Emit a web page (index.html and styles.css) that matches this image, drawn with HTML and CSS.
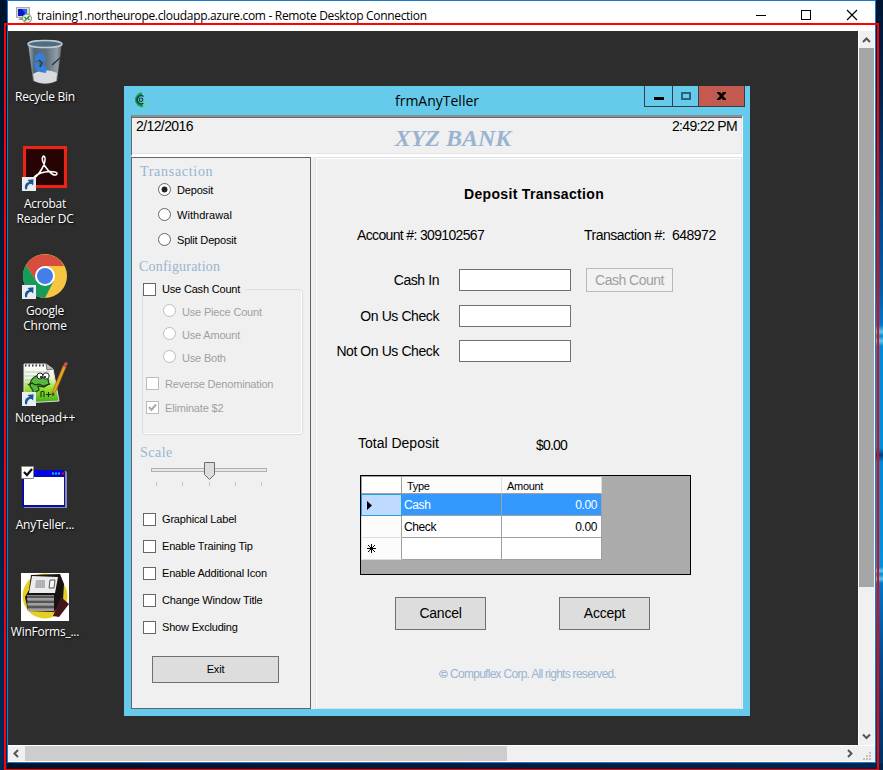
FILE: index.html
```html
<!DOCTYPE html>
<html lang="en">
<head>
<meta charset="utf-8">
<title>training1.northeurope.cloudapp.azure.com - Remote Desktop Connection</title>
<link rel="stylesheet" href="styles.css">
</head>
<body>
<svg width="0" height="0" class="defs">
  <symbol id="shortcut" viewBox="0 0 14 14"><rect width="14" height="14" fill="#e9eef3"/><path d="M3.200 12.200C2.200 8.400 4 5.300 7.300 5.100L5.400 3.100 11.500 2.300 11.200 8.500 9.200 6.800C6.300 7.200 5 9 5.100 12.200Z" fill="#1c5795"/></symbol>
</svg>
<div class="rdp">
  <header class="rdp-bar">
    <svg class="rdp-icon" width="17" height="17" viewBox="0 0 17 17"><rect x=".5" y=".5" width="13" height="10" fill="#d5d8d8" stroke="#aaa"/><path d="M2 2h9v7H2z" fill="#0c19c8"/><path d="M6 2h5v7z" fill="#2e62ef"/><path d="M4 11h6v2H2z" fill="#999"/><circle cx="11" cy="11.500" r="4.500" fill="#e8eee4" stroke="#8a9288"/><path d="M8.500 10l2 2-2 2M13.500 9l-2 2 2 2" fill="none" stroke="#268b25" stroke-width="1.300"/></svg>
    <span class="rdp-title">training1.northeurope.cloudapp.azure.com - Remote Desktop Connection</span>
    <svg class="rdp-controls" width="110" height="20" viewBox="0 0 110 20" fill="none" stroke="#000"><path d="M3 10.500h10"/><rect x="48.500" y="5.500" width="9" height="9"/><path d="M94 5l10 10M104 5L94 15" stroke-width="1.200"/></svg>
  </header>
  <div class="viewport">
    <main class="desktop">
      <nav class="shortcuts">
        <div class="shortcut"><svg width="48" height="48" viewBox="0 0 48 48">
          <defs><linearGradient id="bin" x2="1"><stop stop-color="#aab4bb"/><stop offset=".18" stop-color="#52687a"/><stop offset=".55" stop-color="#60727f"/><stop offset=".85" stop-color="#939da3"/><stop offset="1" stop-color="#59636b"/></linearGradient></defs>
          <path d="M7 5h34l-5 38q-12 6-24 0Z" fill="url(#bin)"/><ellipse cx="24" cy="6" rx="17" ry="3.500" fill="#4b6d85" stroke="#c5ccd0" stroke-width="1.500"/><path d="M12 36q12-7 24-1l-1 8q-11 5-22 0Z" fill="#d8dadb"/><path d="M14 18l4-3 5 2 2 5-4 3-3-3-4 1zM13 25l4-1 1 5 4-2 4 2-1 6-6-1-4-2z" fill="#3480dd"/><path d="M18 22l3 3-2 4M31 27l9-8" fill="none" stroke="#263b4d" stroke-width="1.500"/></svg>
          <span class="name">Recycle Bin</span></div>
        <div class="shortcut"><svg width="48" height="48" viewBox="0 0 48 48"><rect x="3.500" y="2.500" width="41" height="39" fill="#270404" stroke="#ef2213" stroke-width="3"/><path d="M12 34C18 30 25 19 24 13 23 9 20 12 22 17 24 23 31 31 35 30 39 27 31 26 24 27 18 28 13 31 12 34Z" fill="none" stroke="#fff" stroke-width="1.500"/><use href="#shortcut" x="1" y="32" width="14" height="14"/></svg>
          <span class="name">Acrobat<br>Reader DC</span></div>
        <div class="shortcut"><svg width="48" height="48" viewBox="0 0 48 48"><circle cx="24" cy="24" r="22" fill="#f7c640"/><path d="M4.900 13l10.400 16L24 14h19.100A22 22 0 0 0 4.900 13Z" fill="#d94d3f"/><path d="M4.900 13A22 22 0 0 0 24 46L32.700 29 15.300 29Z" fill="#169b58"/><circle cx="24" cy="24" r="10" fill="#fff"/><circle cx="24" cy="24" r="8" fill="#437ee9"/><use href="#shortcut" x="1" y="33" width="14" height="14"/></svg>
          <span class="name">Google<br>Chrome</span></div>
        <div class="shortcut"><svg width="48" height="48" viewBox="0 0 48 48">
          <defs><linearGradient id="leaf" x2="0" y2="1"><stop stop-color="#fff"/><stop offset=".35" stop-color="#f2f6d5"/><stop offset=".6" stop-color="#a2e531"/><stop offset="1" stop-color="#37ab17"/></linearGradient></defs>
          <path d="M3 5h22l7 5 6 32-35 2z" fill="url(#leaf)" stroke="#ddd"/><path d="M4 13h25M4 17h25M4 21h26M4 25h27" stroke="#91b5d5" stroke-width=".7"/><path d="M4 6.500h21" stroke="#333" stroke-width="2" stroke-dasharray="1.500 2"/><path d="M25 5l1 6 6-1" fill="#bbb" stroke="#444" stroke-width=".7"/><path d="M9 27C9 18 17 15 21 18L27 20 28 25 23 28 17 27 18 31 13 34 11 30Z" fill="#58b83b" stroke="#17491c" stroke-width="1.300"/><circle cx="19" cy="17" r="3" fill="#fff" stroke="#222"/><circle cx="25" cy="17" r="3.200" fill="#fff" stroke="#222"/><circle cx="20" cy="18" r="1"/><circle cx="24" cy="18" r="1"/><path d="M7 26l4-2 3 2 4-1 4 2 7-2M20 38v-5q3-2 3 1v4M25 35.500h5M27.500 33v5M30.500 35h3M32 33v4" fill="none" stroke="#282718" stroke-width="1.100"/><path d="M32 31l10-24 3 1-10 24-4 3z" fill="#e6a31d" stroke="#936113" stroke-width=".6"/><path d="M42 7l2-4 3 1-2 4z" fill="#cb4f51"/><use href="#shortcut" x="1" y="33" width="14" height="14"/></svg>
          <span class="name">Notepad++</span></div>
        <div class="shortcut"><svg width="48" height="48" viewBox="0 0 48 48"><path d="M3 5h42l1 2v35H3z" fill="#8c8cab"/><path d="M1 4h42l1 2v35H1z" fill="#080ca0"/><path d="M2 5h40v4H2z" fill="#00f"/><path d="M3 11h40v28H3z" fill="#fff"/><path d="M31 7.500h8" stroke="#19bcfa" stroke-width="2" stroke-dasharray="2 1"/><path d="M41 7.500h2" stroke="#f00" stroke-width="2"/><path d="M.5.5h12v12H.5z" fill="#fff" stroke="#888"/><path d="M3 6l3 3 5-6" fill="none" stroke="#111" stroke-width="2.200"/></svg>
          <span class="name">AnyTeller...</span></div>
        <div class="shortcut"><svg width="48" height="48" viewBox="0 0 48 48"><rect width="48" height="48" fill="#fff"/><circle cx="24" cy="23" r="22.500" fill="#e4cf22"/><path d="M10 2l29-1 4 10-1 16-9 12-26-1-3-14 4-7z" fill="#171313"/><path d="M11 3l26 1-3 16H8z" fill="#ececec"/><path d="M15 7h9v8h-10z" fill="#b1b1b8"/><path d="M29 7h5l-1 8h-5z" fill="#f9f9f9" stroke="#555"/><path d="M6 22h27v16H7z" fill="#85858a"/><path d="M6 24h27M6 29h27M6 34h27" stroke="#444" stroke-width="1.300"/><path d="M6 26h27M6 31h27M7 37h26" stroke="#bbb"/><path d="M34 38l6-14 8 7-10 13-6-1z" fill="#43151d"/></svg>
          <span class="name">WinForms_...</span></div>
      </nav>

      <section class="app">
        <header class="app-bar">
          <svg class="app-icon" width="18" height="18" viewBox="0 0 18 18" fill="none"><path d="M9 1.800A5.800 5.800 0 1 0 10 13.800" stroke="#16a04e" stroke-width="3"/><path d="M10.500 4.500A4 4 0 1 0 10.500 11" stroke="#123e3c" stroke-width="1.500"/><circle cx="8" cy="7.800" r="1.800" stroke="#123e3c" stroke-width="1.200"/><path d="M9 10h6M10 13l4-2v3h2" stroke="#70cf9b"/></svg>
          <span class="app-title">frmAnyTeller</span>
          <div class="caption">
            <span class="cap cap-min"><svg width="10" height="3"><path d="M0 0h10v3H0z"/></svg></span>
            <span class="cap cap-max"><svg width="10" height="8" fill="none" stroke="#2d6277" stroke-width="2"><path d="M1 1h8v6H1z"/></svg></span>
            <span class="cap cap-close"><svg width="9" height="8" viewBox="0 0 9 8"><path d="M0 0h3l1.500 2L6 0h3v1L6 4l3 3v1H6L4.500 6 3 8H0V7l3-3-3-3z"/></svg></span>
          </div>
        </header>
        <div class="client">
          <div class="banner">
            <span class="date">2/12/2016</span>
            <span class="bank">XYZ BANK</span>
            <span class="time">2:49:22 PM</span>
          </div>
          <div class="panes">
            <aside class="options">
              <h2 class="heading h-trans">Transaction</h2>
              <div class="radios">
                <label class="opt"><i class="radio on"></i><span>Deposit</span></label>
                <label class="opt wide"><i class="radio"></i><span>Withdrawal</span></label>
                <label class="opt"><i class="radio"></i><span>Split Deposit</span></label>
              </div>
              <h2 class="heading h-conf">Configuration</h2>
              <fieldset class="cash">
                <legend class="opt legend"><i class="check"></i><span>Use Cash Count</span></legend>
                <label class="opt off sub"><i class="radio"></i><span>Use Piece Count</span></label>
                <label class="opt off sub"><i class="radio"></i><span>Use Amount</span></label>
                <label class="opt off sub"><i class="radio"></i><span>Use Both</span></label>
                <label class="opt off flag first"><i class="check"></i><span>Reverse Denomination</span></label>
                <label class="opt off flag"><i class="check"><svg width="11" height="11" viewBox="0 0 11 11"><path d="M2 5l2.500 3L9 2.500" fill="none" stroke="#aaa" stroke-width="2"/></svg></i><span>Eliminate $2</span></label>
              </fieldset>
              <h2 class="heading h-scale">Scale</h2>
              <svg class="slider" width="118" height="26" viewBox="0 0 118 26"><rect x=".5" y="6.500" width="115" height="3" fill="#e7eaea" stroke="#b0b0b0"/><path d="M5.500 20v4M31.500 20v4M58.500 20v4M84.500 20v4M110.500 20v4" stroke="#c4c4c4"/><path d="M53.500.5h10v12l-5 5-5-5z" fill="#ddd" stroke="#6b6b6b"/></svg>
              <div class="toggles">
                <label class="opt"><i class="check"></i><span>Graphical Label</span></label>
                <label class="opt"><i class="check"></i><span>Enable Training Tip</span></label>
                <label class="opt"><i class="check"></i><span>Enable Additional Icon</span></label>
                <label class="opt"><i class="check"></i><span>Change Window Title</span></label>
                <label class="opt"><i class="check"></i><span>Show Excluding</span></label>
              </div>
              <button class="btn exit">Exit</button>
            </aside>
            <section class="form">
              <h1 class="form-title">Deposit Transaction</h1>
              <div class="ids"><span class="acct">Account #: 309102567</span><span class="trans">Transaction #:&nbsp; 648972</span></div>
              <div class="fields">
                <div class="field"><span class="label">Cash In</span><input class="box"><button class="btn count" disabled>Cash Count</button></div>
                <div class="field"><span class="label">On Us Check</span><input class="box"></div>
                <div class="field"><span class="label">Not On Us Check</span><input class="box"></div>
              </div>
              <div class="total"><span class="total-label">Total Deposit</span><span class="sum">$0.00</span></div>
              <div class="sheet">
                <div class="grid">
                  <div class="cell corner"></div><div class="cell head">Type</div><div class="cell head amount">Amount</div>
                  <div class="cell mark current"><svg width="6" height="9"><path d="M0 0l5 4.500L0 9z"/></svg></div><div class="cell sel">Cash</div><div class="cell sel num">0.00</div>
                  <div class="cell mark"></div><div class="cell">Check</div><div class="cell num">0.00</div>
                  <div class="cell mark"><svg width="9" height="9" stroke="#000"><path d="M4.500 0v9M0 4.500h9M1 1l7 7M8 1L1 8"/></svg></div><div class="cell"></div><div class="cell"></div>
                </div>
              </div>
              <div class="actions"><button class="btn">Cancel</button><button class="btn">Accept</button></div>
              <footer class="legal"><svg width="9" height="8" fill="none" stroke="#99b4d1"><ellipse cx="4.500" cy="4" rx="4" ry="3.500"/><path d="M7 2.500H3v3h4"/></svg><span>Compuflex Corp. All rights reserved.</span></footer>
            </section>
          </div>
        </div>
      </section>
    </main>
    <div class="vscroll">
      <svg width="15" height="17" fill="none" stroke="#555" stroke-width="2"><path d="M4 11l3.500-3.500L11 11"/></svg>
      <div class="vthumb"></div>
      <svg width="15" height="17" fill="none" stroke="#555" stroke-width="2"><path d="M4 6.500L7.500 10 11 6.500"/></svg>
    </div>
    <div class="hscroll">
      <svg width="17" height="15" fill="none" stroke="#555" stroke-width="2"><path d="M10 4L6.500 7.500 10 11"/></svg>
      <div class="hthumb"></div>
      <svg width="17" height="15" fill="none" stroke="#555" stroke-width="2"><path d="M7 4l3.500 3.500L7 11"/></svg>
    </div>
    <div class="grip"><svg width="8" height="8" fill="#bfbfbf"><path d="M6 0h2v2H6zM3 3h2v2H3zM6 3h2v2H6zM0 6h2v2H0zM3 6h2v2H3zM6 6h2v2H6z"/></svg></div>
  </div>
</div>
<div class="outline"></div>
</body>
</html>
```
FILE: styles.css
```css
* { box-sizing: border-box; }
html, body { height: 770px; overflow: hidden; }
body {
  margin: 0;
  padding-left: 7px;
  font-family: "Liberation Sans", Arial, sans-serif;
  color: #000;
  background:
    linear-gradient(#00132b, #00295a) left / 7px 100% no-repeat,
    linear-gradient(90deg, #00112a, #00264f) bottom / 100% 7px no-repeat,
    linear-gradient(#001531 0, #00254f 100px, #004a8e 220px, #005da6 290px, #0078c9 325px, #60c5e8 332px, #0089d6 336px, #60c5e8 341px, #0089d8 346px, #0090dc 448px, #00407c 455px, #0089d8 462px, #0091dd 567px, #60c5e8 571px, #0089d6 574px, #60c5e8 579px, #0077c9 583px, #004c91 660px, #003264 763px);
}
h1, h2 { margin: 0; font-weight: normal; }
button, input { font: inherit; padding: 0; margin: 0; border-radius: 0; }
svg { display: block; flex: none; }
.defs { position: absolute; }

.rdp { width: 869px; height: 763px; border: 1px solid #1979ca; background: #fff; }
.rdp-bar { height: 30px; display: flex; align-items: flex-start; }
.rdp-icon { margin: 6px 0 0 8px; }
.rdp-title { margin: 6px 0 0 4px; width: 396px; white-space: nowrap; font: 12px/17px "Open Sans", "Noto Sans", sans-serif; letter-spacing: -.32px; }
.rdp-controls { margin: 4px 12px 0 auto; }
.outline { position: absolute; left: 4px; top: 23px; width: 875px; height: 747px; border: 2px solid #f00; border-bottom-width: 1px; }

.viewport { display: grid; grid-template: 714px 17px / 850px 17px; }
.desktop { background: #2d2d2d; display: flex; }
.shortcuts { width: 74px; padding-top: 7px; }
.shortcut { height: 107px; display: flex; flex-direction: column; align-items: center; }
.name { margin-top: 3px; color: #fff; text-align: center; white-space: nowrap; font: 12px/15px "Open Sans", "Noto Sans", sans-serif; letter-spacing: -.25px; text-shadow: 1px 1px 2px #000; }

.vscroll { width: 15px; margin: 0 1px; background: #f0f0f0; display: flex; flex-direction: column; }
.vthumb { height: 539px; margin-bottom: auto; background: #a6a6a6; }
.hscroll { background: #f0f0f0; border: solid #fff; border-width: 1px 0; display: flex; }
.hthumb { width: 482px; margin-right: auto; background: #cdcdcd; }
.grip { background: #f0f0f0; border: solid #fff; border-width: 1px 0; padding: 6px 0 0 5px; }

.app { margin: 55px 0 0 42px; width: 626px; height: 630px; background: #66cbea; padding: 0 7px; }
.app-bar { height: 29px; display: flex; align-items: flex-start; }
.app-icon { margin: 6px 0 0 2px; }
.app-title { flex: 1; padding-left: 79px; text-align: center; font: 14px/29px "Open Sans", "Noto Sans", sans-serif; }
.caption { display: flex; height: 21px; margin-right: -2px; border: 1px solid #323f44; border-top: 0; }
.cap { display: flex; align-items: center; justify-content: center; }
.cap + .cap { border-left: 1px solid #323f44; }
.cap-min { width: 27px; padding-top: 5px; }
.cap-max { width: 26px; }
.cap-close { width: 46px; background: #c35a50; }

.client { width: 612px; height: 594px; background: #f0f0f0; }
.banner { height: 42px; border: solid; border-width: 2px 1px 3px 1px; border-color: #8a8f92 #fff #fff #696969; box-shadow: inset 0 1px #696969, inset -1px -1px #e3e3e3; display: flex; justify-content: space-between; font-size: 14px; line-height: 16px; padding: 1px 5px 0 4px; }
.date { width: 74px; letter-spacing: -.6px; white-space: nowrap; }
.time { width: 74px; letter-spacing: -.65px; white-space: nowrap; text-align: right; }
.bank { padding: 7px 0 0 33px; font: italic bold 24px/26px "Liberation Serif", serif; color: #99b4d1; }

.panes { display: flex; height: 552px; }
.options { width: 180px; border: 1px solid #646464; font-size: 11px; }
.heading { font: 14px/18px "Liberation Serif", serif; color: #99b4d1; padding-left: 8px; letter-spacing: .5px; }
.h-trans { padding-top: 5px; letter-spacing: .7px; }
.opt { display: flex; align-items: center; gap: 6px; white-space: nowrap; letter-spacing: -.18px; }
.opt > span { position: relative; }
.radios { margin-top: -4px; }
.radios .opt { height: 25px; padding-left: 26px; }
.radios .wide { letter-spacing: .05px; }
.radio { width: 13px; height: 13px; border: 1px solid #666; border-radius: 50%; background: #fff; flex: none; }
.radio.on { background: radial-gradient(circle, #222 0 2.700px, #fff 3.300px); }
.check { width: 13px; height: 13px; border: 1px solid #666; background: #fff; flex: none; }
.h-conf { padding-left: 7px; padding-top: 6px; letter-spacing: .2px; }
.cash { min-width: 0; width: 161px; height: 153px; margin: 6px 0 0 10px; padding: 3px 0 0; border: 1px solid #d5dfe5; border-radius: 3px; box-shadow: inset -1px -1px #fff; }
.legend { padding: 0 6px 0 0; height: 14px; }
.off { color: #a0a0a0; }
.off > span { top: 1px; }
.off .radio, .off .check { border-color: #bcbcbc; }
.sub { height: 23px; padding-left: 20px; }
.flag { height: 24px; padding-left: 3px; }
.flag.first { margin-top: 3px; }
.h-scale { padding-top: 9px; }
.slider { margin: 0 0 0 19px; }
.toggles { padding: 18px 0 0 11px; }
.toggles .opt { height: 27px; }
.toggles span { top: -1px; }
.btn { background: #ddd; border: 1px solid #707070; color: #000; }
.exit { display: block; width: 127px; height: 27px; margin: 15px 0 0 20px; padding-bottom: 1px; letter-spacing: -.2px; }

.form { width: 427px; margin-left: 4px; border: 1px solid #dce3e8; box-shadow: inset 1px 1px #fff; font-size: 14px; line-height: 18px; }
.form-title { padding: 27px 0 0 148px; font-size: 14px; line-height: 18px; font-weight: bold; white-space: nowrap; letter-spacing: .33px; }
.ids { display: flex; padding: 23px 0 0 41px; white-space: nowrap; letter-spacing: -.5px; }
.acct { width: 227px; letter-spacing: -.65px; }
.fields { padding-top: 18px; }
.field { display: flex; align-items: center; height: 36px; }
.field:last-child { height: 34px; }
.label { width: 123px; text-align: right; margin-right: 20px; white-space: nowrap; letter-spacing: -.42px; }
.box { width: 112px; height: 22px; border: 1px solid #707070; background: #fff; }
.count { width: 87px; height: 24px; margin-left: 15px; background: #f2f2f2; border-color: #b5b9bb; color: #a0a0a0; letter-spacing: -.5px; }
.total { display: flex; padding: 66px 0 0 42px; }
.total-label { width: 178px; }
.sum { padding-top: 2px; letter-spacing: -.8px; }
.sheet { width: 331px; height: 100px; margin: 21px 0 0 44px; border: 1px solid #000; background: #ababab; }
.grid { display: grid; grid-template: 18px 22px 22px 22px / 41px 100px 100px; width: 241px; font-size: 12px; line-height: 20px; letter-spacing: -.4px; }
.cell { background: #fff; border: solid #a0a0a0; border-width: 0 1px 1px 0; padding: 1px 4px 0 2px; }
.corner { border-width: 1px; }
.head { font-size: 11px; line-height: 16px; letter-spacing: -.3px; padding: 1px 0 0 5px; border-color: #a0a0a0 #ddd; border-top-width: 1px; background: #fcfcfc; }
.mark { background: #fcfcfc; border-color: #ddd; border-width: 0 1px 1px 1px; border-right-color: #a0a0a0; padding: 6px 0 0 5px; }
.current { background: #bfdaff; border: 1px solid #27a0dc; }
.sel { background: #3399ff; color: #fff; }
.num { text-align: right; }
.actions { display: flex; gap: 73px; padding: 22px 0 0 79px; }
.actions .btn { width: 91px; height: 33px; padding-bottom: 1px; letter-spacing: -.25px; }
.legal { display: flex; align-items: center; gap: 2px; padding: 35px 0 0 123px; font-size: 12px; color: #99b4d1; letter-spacing: -.72px; white-space: nowrap; }
```
